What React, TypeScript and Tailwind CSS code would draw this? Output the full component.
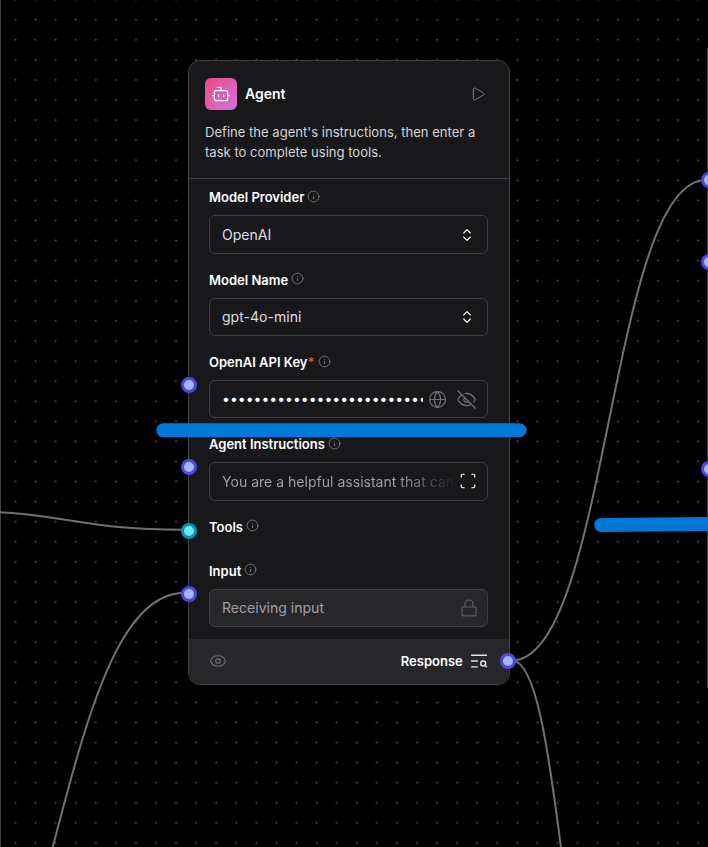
import type { ReactNode } from "react";
import { Bot, Play, ChevronsUpDown, Globe, Info, Scan, Eye, TextSearch } from "lucide-react";

function Handle({ x, y, cyan = false }: { x: number; y: number; cyan?: boolean }) {
  return (
    <span
      className={`absolute size-4 -translate-x-1/2 -translate-y-1/2 rounded-full border-3 ${
        cyan ? "border-[#0891b2] bg-[#67e8f9]" : "border-[#4f46e5] bg-[#a5b4fc]"
      }`}
      style={{ left: x, top: y }}
    />
  );
}

function Label({ children, required = false }: { children: ReactNode; required?: boolean }) {
  return (
    <div className="flex h-5 items-center pt-[1.6px] text-[13px] font-[570] text-white">
      <span>{children}</span>
      {required && <span className="text-[#ef4444]">*</span>}
      <Info className="relative -top-[1.5px] ml-[3px] size-[13px] text-[#85858d]" strokeWidth={1.5} />
    </div>
  );
}

function Field({ label, required, filled = false, children }: { label: string; required?: boolean; filled?: boolean; children: ReactNode }) {
  return (
    <div className="h-[82.3px] shrink-0">
      <Label required={required}>{label}</Label>
      <div
        className={`mt-2 flex h-[38.4px] items-center rounded-md border border-[#3f3f46] px-3 text-[14.05px] text-[#dedee2] ${
          filled ? "bg-[#27272a]" : ""
        }`}
      >
        {children}
      </div>
    </div>
  );
}

function EyeOffIcon() {
  return (
    <svg viewBox="0 0 24 24" className="ml-[9px] size-[21px] shrink-0 text-[#71717a]" fill="none" stroke="currentColor" strokeWidth="1.5" strokeLinecap="round" strokeLinejoin="round">
      <path d="M9.88 9.88a3 3 0 1 0 4.24 4.24" />
      <path d="M10.73 5.08A10.43 10.43 0 0 1 12 5c7 0 10 7 10 7a13.16 13.16 0 0 1-1.67 2.68" />
      <path d="M6.61 6.61A13.526 13.526 0 0 0 2 12s3 7 10 7a9.74 9.74 0 0 0 5.39-1.61" />
      <path d="M2 2l20 20" />
    </svg>
  );
}

function LockIcon() {
  return (
    <svg viewBox="0 0 16 18" className="mr-[-2px] h-[18px] w-4 shrink-0 text-[#5d5d64]" fill="none" stroke="currentColor" strokeWidth="1.2" strokeLinejoin="round">
      <rect x="1" y="8" width="14" height="8.8" rx="1.3" />
      <path d="M4 8V5a4 4 0 0 1 8 0v3" />
    </svg>
  );
}

export default function App() {
  return (
    <main className="relative h-[847px] w-[708px] overflow-hidden bg-black font-['Inter',sans-serif]">
      <svg className="absolute inset-0" width="708" height="847" fill="none">
        <defs>
          <pattern id="grid" x="5.4" y="9.65" width="20.08" height="20.08" patternUnits="userSpaceOnUse">
            <circle cx="10.04" cy="10.04" r="1.05" fill="#505052" />
          </pattern>
        </defs>
        <rect width="708" height="847" fill="url(#grid)" />
        <path d="M0.5 0V847M707.5 48V688" stroke="#3f3f46" />
        <g stroke="#707070" strokeWidth="2">
          <path d="M-45 511C69 511 69 529.7 185 529.7" />
          <path d="M-73 1083C55 1083 55 593 184 593" />
          <path d="M512 660.5C608 660.5 610 180 706 180" />
          <path d="M512 660.5C561 660.5 561 1034 610 1034" />
        </g>
      </svg>

      <section className="absolute left-[187.5px] top-[60.4px] flex h-[624.6px] w-[322px] flex-col overflow-hidden rounded-xl border-[1.5px] border-[#3f3f46] bg-[#18181b]">
        <header className="h-[117.6px] shrink-0 border-b border-[#3f3f46] pl-[16.5px] pr-4 pt-[16.6px]">
          <div className="flex h-8 items-center">
            <span className="flex size-8 items-center justify-center rounded-md bg-linear-to-br from-[#e94680] to-[#d26fe3]">
              <Bot className="size-5 text-white" strokeWidth={1.5} />
            </span>
            <h1 className="ml-2 grow text-sm font-[570] text-white">Agent</h1>
            <Play className="mr-[7px] size-4 text-[#7c7c85]" strokeWidth={1.5} />
          </div>
          <p className="mt-3 text-[13.07px] leading-[20px] text-[#d4d4d8]">
            Define the agent's instructions, then enter a<br />task to complete using tools.
          </p>
        </header>

        <div className="flex h-[459.8px] shrink-0 flex-col pl-[20.5px] pr-[20.3px] pt-[8.4px]">
          <Field label="Model Provider">
            <span className="grow">OpenAI</span>
            <ChevronsUpDown className="size-4 text-white" strokeWidth={1.7} />
          </Field>
          <Field label="Model Name">
            <span className="grow">gpt-4o-mini</span>
            <ChevronsUpDown className="size-4 text-white" strokeWidth={1.7} />
          </Field>
          <Field label="OpenAI API Key" required>
            <input
              type="password"
              readOnly
              value="000000000000000000000000000000000000"
              className="w-[200.5px] shrink-0 bg-transparent p-0 text-sm text-white outline-none"
            />
            <Globe className="ml-[5px] size-[19px] shrink-0 text-[#71717a]" strokeWidth={1.5} />
            <EyeOffIcon />
          </Field>
          <Field label="Agent Instructions">
            <span className="w-[236px] shrink-0 overflow-hidden whitespace-nowrap bg-linear-to-r from-[#a1a1aa] from-75% to-[#18181b] bg-clip-text text-transparent">
              You are a helpful assistant that can
            </span>
            <Scan className="ml-px size-[18px] shrink-0 text-white" strokeWidth={1.5} />
          </Field>
          <div className="h-[44.1px] shrink-0">
            <Label>Tools</Label>
          </div>
          <Field label="Input" filled>
            <span className="grow text-[#a1a1aa]">Receiving input</span>
            <LockIcon />
          </Field>
        </div>

        <footer className="flex grow items-center bg-[#27272a] pl-[20.5px] pr-[19.3px]">
          <Eye className="size-[18px] text-[#71717a]" strokeWidth={1.5} />
          <span className="ml-auto text-[13px] font-[570] text-white">Response</span>
          <TextSearch className="ml-[6.5px] size-5 text-[#e4e4e7]" strokeWidth={1.7} />
        </footer>
      </section>

      <Handle x={189} y={385} />
      <Handle x={189} y={467.3} />
      <Handle x={189} y={531} cyan />
      <Handle x={189} y={594} />
      <Handle x={508.4} y={661.2} />
      <Handle x={708.5} y={180} />
      <Handle x={708.5} y={262} />
      <Handle x={708.5} y={469} />

      <svg className="absolute inset-0" width="708" height="847" stroke="#0078d7" strokeWidth="14" strokeLinecap="round">
        <path d="M163.3 430.2H519.6M601.2 525L720 524" />
      </svg>
    </main>
  );
}
